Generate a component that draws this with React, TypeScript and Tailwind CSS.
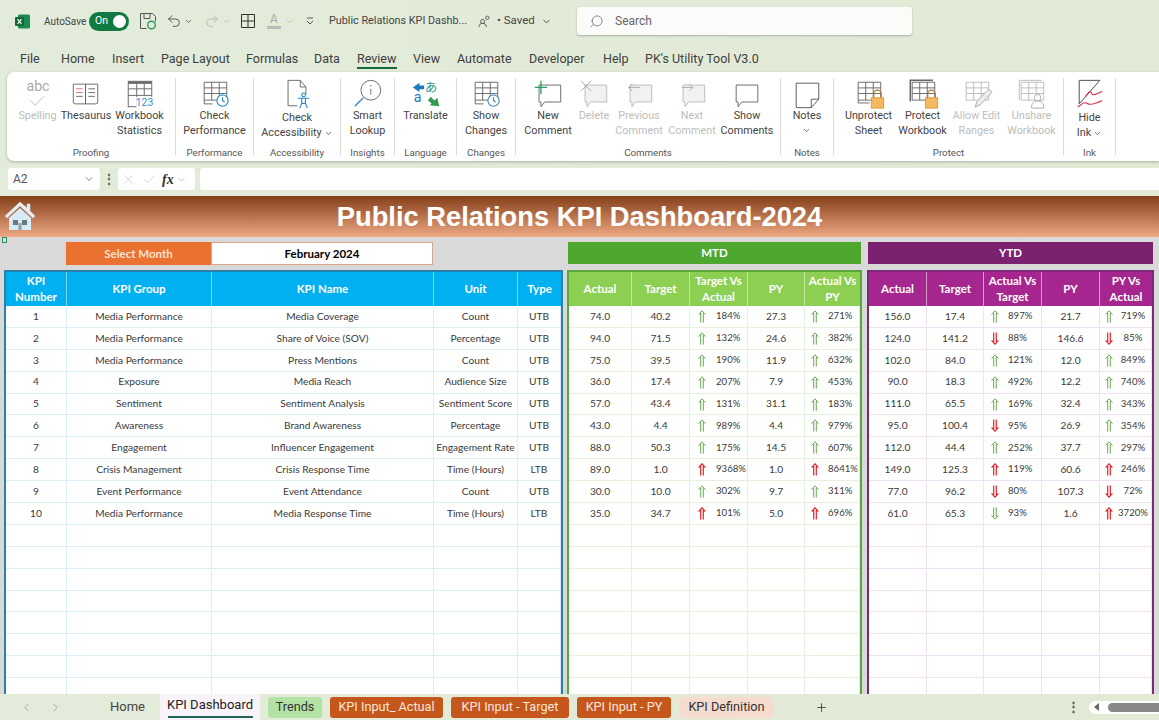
import type { ReactNode } from 'react';
import { ChevronDown, ChevronLeft, ChevronRight, Plus, Search, Check, X, Undo2, Redo2 } from 'lucide-react';

const tabs = [
  { t: 'File', c: 'w-[41px]' }, { t: 'Home', c: 'w-[51px]' }, { t: 'Insert', c: 'w-[49px]' }, { t: 'Page Layout', c: 'w-[85px]' },
  { t: 'Formulas', c: 'w-[68px]' }, { t: 'Data', c: 'w-[43px]' }, { t: 'Review', c: 'w-[56px]' }, { t: 'View', c: 'w-[44px]' },
  { t: 'Automate', c: 'w-[72px]' }, { t: 'Developer', c: 'w-[74px]' }, { t: 'Help', c: 'w-[42px]' }, { t: "PK's Utility Tool V3.0", c: 'w-[130px]' },
];

const kpis = [
  ['1', 'Media Performance', 'Media Coverage', 'Count', 'UTB'],
  ['2', 'Media Performance', 'Share of Voice (SOV)', 'Percentage', 'UTB'],
  ['3', 'Media Performance', 'Press Mentions', 'Count', 'UTB'],
  ['4', 'Exposure', 'Media Reach', 'Audience Size', 'UTB'],
  ['5', 'Sentiment', 'Sentiment Analysis', 'Sentiment Score', 'UTB'],
  ['6', 'Awareness', 'Brand Awareness', 'Percentage', 'UTB'],
  ['7', 'Engagement', 'Influencer Engagement', 'Engagement Rate', 'UTB'],
  ['8', 'Crisis Management', 'Crisis Response Time', 'Time (Hours)', 'LTB'],
  ['9', 'Event Performance', 'Event Attendance', 'Count', 'UTB'],
  ['10', 'Media Performance', 'Media Response Time', 'Time (Hours)', 'LTB'],
];

type Dir = 'gu' | 'ru' | 'rd' | 'gd';
type Row = [string, string, Dir, string, string, Dir, string];

const mtd: Row[] = [
  ['74.0', '40.2', 'gu', '184%', '27.3', 'gu', '271%'],
  ['94.0', '71.5', 'gu', '132%', '24.6', 'gu', '382%'],
  ['75.0', '39.5', 'gu', '190%', '11.9', 'gu', '632%'],
  ['36.0', '17.4', 'gu', '207%', '7.9', 'gu', '453%'],
  ['57.0', '43.4', 'gu', '131%', '31.1', 'gu', '183%'],
  ['43.0', '4.4', 'gu', '989%', '4.4', 'gu', '979%'],
  ['88.0', '50.3', 'gu', '175%', '14.5', 'gu', '607%'],
  ['89.0', '1.0', 'ru', '9368%', '1.0', 'ru', '8641%'],
  ['30.0', '10.0', 'gu', '302%', '9.7', 'gu', '311%'],
  ['35.0', '34.7', 'ru', '101%', '5.0', 'ru', '696%'],
];

const ytd: Row[] = [
  ['156.0', '17.4', 'gu', '897%', '21.7', 'gu', '719%'],
  ['124.0', '141.2', 'rd', '88%', '146.6', 'rd', '85%'],
  ['102.0', '84.0', 'gu', '121%', '12.0', 'gu', '849%'],
  ['90.0', '18.3', 'gu', '492%', '12.2', 'gu', '740%'],
  ['111.0', '65.5', 'gu', '169%', '32.4', 'gu', '343%'],
  ['95.0', '100.4', 'rd', '95%', '26.9', 'gu', '354%'],
  ['112.0', '44.4', 'gu', '252%', '37.7', 'gu', '297%'],
  ['149.0', '125.3', 'ru', '119%', '60.6', 'ru', '246%'],
  ['77.0', '96.2', 'rd', '80%', '107.3', 'rd', '72%'],
  ['61.0', '65.3', 'gd', '93%', '1.6', 'ru', '3720%'],
];

function Arrow({ d }: { d: Dir }) {
  const red = d[0] === 'r';
  return (
    <svg viewBox="0 0 8 13" className={`h-[13px] w-[8px] shrink-0 ${d[1] === 'd' ? 'rotate-180' : ''}`} fill="none" stroke={red ? '#e0242c' : '#62a548'} strokeWidth={red ? 1.2 : 0.95}>
      <path d="M.6 4.6 4 .8l3.4 3.8M2.7 3v9.6M5.3 3v9.6" />
    </svg>
  );
}

// ribbon icons, all drawn on a 34x34 box
function Ico({ children }: { children: ReactNode }) {
  return <svg viewBox="0 0 34 34" className="h-[32px] w-[32px]" fill="none" stroke="#666" strokeWidth="1">{children}</svg>;
}

function GridLines({ c = '#666' }: { c?: string }) {
  return <path stroke={c} d="M5.5 4.5h24v19h-24zM5.5 10.5h24M5.5 16.5h24M13.5 4.5v19M21.5 4.5v19" />;
}

function Clock({ c = '#2b88c8' }: { c?: string }) {
  return (
    <g stroke={c} strokeWidth="1.2">
      <circle cx="25" cy="24" r="6" fill="#fff" />
      <path d="M25 20.5V24l2.3 1.5M23 16.6h4" />
    </g>
  );
}

function Bubble({ c = '#666', fill = 'none', x = 7 }: { c?: string; fill?: string; x?: number }) {
  return <path stroke={c} fill={fill} d={`M${x}.5 7.5h23v18h-17l-4 5v-5h-2z`} />;
}

function Lock() {
  return (
    <g>
      <path stroke="#a8742a" strokeWidth="1.3" d="M22 21v-4a4 4 0 0 1 8 0v4" />
      <rect x="19.5" y="21" width="13" height="11" fill="#f4b860" stroke="#e09b3c" />
    </g>
  );
}

const icons: Record<string, ReactNode> = {
  spelling: (
    <Ico>
      <text x="17" y="14" textAnchor="middle" fontSize="15" fill="#aaa" stroke="none" fontFamily="Roboto">abc</text>
      <path stroke="#bbb" d="m9 24 5 5 10-10" />
    </Ico>
  ),
  thesaurus: (
    <Ico>
      <path d="M3.5 6.5h13v21h-11l-2-1zM16.5 6.5h13v20l-2 1h-11z" />
      <path stroke="#d76b6b" d="M6.5 11.5h7M6.5 15.5h7" />
      <path d="M6.5 19.5h7M19.5 11.5h7M19.5 15.5h7M19.5 19.5h7" />
    </Ico>
  ),
  stats: (
    <Ico>
      <rect x="4.5" y="3.5" width="25" height="27" />
      <path strokeWidth="2.4" d="M4.5 5h25" />
      <path d="M4.5 11.5h25M4.5 18.5h25M13.5 6v24M21.5 6v12" />
      <rect x="13" y="20" width="18" height="12" fill="#fff" stroke="none" />
      <text x="12.5" y="30" fontSize="11" fill="#3d8ec9" stroke="none" fontFamily="Roboto">123</text>
    </Ico>
  ),
  perf: <Ico><GridLines /><path d="M5.5 23.5v4h9" /><Clock /></Ico>,
  access: (
    <Ico>
      <path d="M7.5 2.5h13l6 7v8M20.5 2.5v7h6M7.5 2.5v27h10" />
      <g stroke="#2b88c8" strokeWidth="1.2">
        <circle cx="24" cy="18" r="2" />
        <path d="M18 21.5h12M22 22v5l-2 5M26 22v5l2 5M22 27h4" />
      </g>
    </Ico>
  ),
  lookup: (
    <Ico>
      <circle cx="20" cy="13" r="10.5" />
      <path d="M20 11.5v6M20 7.5v1.5" />
      <path stroke="#2b88c8" strokeWidth="1.3" d="m12 21-9 9" />
    </Ico>
  ),
  translate: (
    <Ico>
      <path fill="#1e78c0" stroke="none" d="M3 10l7-5v3h5v4h-5v3z" />
      <text x="16" y="15" fontSize="13" fill="#2f9a8a" stroke="none" fontFamily="'Noto Sans CJK JP'">あ</text>
      <text x="4" y="26" fontSize="15" fill="#1e78c0" stroke="none" fontFamily="Roboto">a</text>
      <path fill="#2f9a4a" stroke="none" d="M31 30l-10-1 2-2-4-3 3-4 4 4 3-3z" />
    </Ico>
  ),
  changes: <Ico><GridLines /><path d="M5.5 23.5v4h9" /><Clock c="#4a86b8" /></Ico>,
  newc: (
    <Ico>
      <Bubble />
      <path stroke="#2f9a62" strokeWidth="1.4" d="M3 10h13M9.5 3v14" />
    </Ico>
  ),
  del: (
    <Ico>
      <Bubble c="#bbb" fill="#f1f1f1" />
      <path stroke="#aaa" d="m3 3 11 11M14 3 3 14" />
    </Ico>
  ),
  prev: (
    <Ico>
      <Bubble c="#bbb" fill="#f1f1f1" />
      <path stroke="#aaa" d="M6 10h12M6 10l4-4M6 10l4 4" />
    </Ico>
  ),
  next: (
    <Ico>
      <Bubble c="#bbb" fill="#f1f1f1" />
      <path stroke="#aaa" d="M6 10h12M18 10l-4-4M18 10l-4 4" />
    </Ico>
  ),
  show: <Ico><Bubble x={5} /></Ico>,
  notes: (
    <Ico>
      <path stroke="#555" d="M5.5 5.5h24v17l-8 9h-16z" />
      <path stroke="#555" d="M29.5 22.5h-8v9" />
    </Ico>
  ),
  unprotect: <Ico><GridLines /><path d="M5.5 23.5v3h12" /><Lock /></Ico>,
  protect: <Ico><path strokeWidth="1.6" d="M3.5 25V2.5h24" /><GridLines /><Lock /></Ico>,
  allow: (
    <Ico>
      <GridLines c="#bbb" />
      <path stroke="#aaa" fill="#eee" d="m15 31 2-6 12-13 4 3-12 13z" />
    </Ico>
  ),
  unshare: (
    <Ico>
      <path stroke="#bbb" d="M3.5 24V2.5h24" />
      <GridLines c="#bbb" />
      <circle cx="23" cy="21" r="3.5" stroke="#aaa" fill="#fff" />
      <path stroke="#aaa" fill="#fff" d="M16.5 32c0-6 3-7.500 6.500-7.500s6.500 1.500 6.500 7.500z" />
    </Ico>
  ),
  ink: (
    <Ico>
      <path stroke="#444" d="M5.500 2.500h22M5.500 2.500v25M5.500 27.500 27.500 2.500" />
      <path stroke="#d8344e" strokeWidth="1.2" d="M12 20c4-6 6-7 7-3 1 2 5 0 11-3M4 31c5-4 7-6 10-4s8 1 16-3" />
    </Ico>
  ),
};

function Btn({ icon, l1, l2, w, off, drop, low }: { icon: string; l1: string; l2?: string; w: string; off?: boolean; drop?: boolean; low?: boolean }) {
  return (
    <div className={`${w} flex shrink-0 flex-col items-center`}>
      <div className="flex h-[30px] items-start">{icons[icon]}</div>
      <div className={`${low ? 'mt-[2px]' : ''} text-center text-[10.8px] leading-[15px] whitespace-nowrap ${off ? 'text-[#bdbdbd]' : 'text-[#444]'}`}>
        <div>{l1}</div>
        {l2 && <div>{l2}{drop && <ChevronDown className="ml-[2px] inline h-[9px] w-[9px]" strokeWidth={2} />}</div>}
        {!l2 && drop && <ChevronDown className="mx-auto mt-[3px] h-[9px] w-[9px]" strokeWidth={2} />}
      </div>
    </div>
  );
}

function Group({ w, label, children }: { w: string; label: string; children: ReactNode }) {
  return (
    <div className={`${w} relative flex h-full shrink-0 flex-col border-r border-[#dcdcdc]`}>
      <div className="flex flex-1 justify-center">{children}</div>
      <div className="absolute inset-x-0 bottom-[-4px] text-center text-[9.7px] leading-[12px] text-[#555]">{label}</div>
    </div>
  );
}

function Head({ t, c }: { t: string; c: string }) {
  return <div className={`flex items-center justify-center border-r px-[2px] text-center text-[11.5px] leading-[16px] font-bold text-white last:border-r-0 ${c}`}>{t}</div>;
}

function Body({ children, line }: { children?: ReactNode; line: string }) {
  return <div className={`flex h-[21.9px] items-center justify-center border-r border-b text-[10.2px] whitespace-nowrap text-[#3a3a3a] last:border-r-0 ${line}`}>{children}</div>;
}

function Pct({ d, v, line, arrow, gap }: { d: Dir; v: string; line: string; arrow: string; gap: string }) {
  return (
    <div className={`flex h-[21.9px] items-center border-r border-b text-[9.6px] text-[#3a3a3a] last:border-r-0 ${line} ${arrow}`}>
      <Arrow d={d} />
      <span className={gap}>{v}</span>
    </div>
  );
}

const blanks = Array.from({ length: 9 });

function ValueTable({ box, head, line, sep, cols, labels, rows, firstPct, lastPct }: {
  box: string; head: string; line: string; sep: string; cols: string; labels: string[]; rows: Row[];
  firstPct: { arrow: string; gap: string }; lastPct: { arrow: string; gap: string };
}) {
  return (
    <div className={`${box} h-[440px] shrink-0 overflow-hidden border-2 bg-white`}>
      <div className={`grid h-[34px] ${cols} ${head}`}>
        {labels.map(l => <Head key={l} t={l} c={sep} />)}
      </div>
      <div className={`grid ${cols}`}>
        {rows.map(r => [
          <Body key={r[0] + 'a'} line={line}>{r[0]}</Body>,
          <Body key={r[0] + 't'} line={line}>{r[1]}</Body>,
          <Pct key={r[0] + 'p'} d={r[2]} v={r[3]} line={line} {...firstPct} />,
          <Body key={r[0] + 'y'} line={line}>{r[4]}</Body>,
          <Pct key={r[0] + 'q'} d={r[5]} v={r[6]} line={line} {...lastPct} />,
        ])}
        {blanks.map((_, i) => labels.map(l => <Body key={i + l} line={line} />))}
      </div>
    </div>
  );
}

function SheetTab({ t, c }: { t: string; c: string }) {
  return <div className={`flex h-[21px] shrink-0 items-center justify-center rounded-[3px] text-[12.7px] ${c}`}>{t}</div>;
}

export default function App() {
  const kpiCols = 'grid-cols-[61px_145px_222px_84px_1fr]';
  const kpiLine = 'border-[#dcedf6]';
  return (
    <div className="flex h-[720px] w-full flex-col overflow-hidden bg-gradient-to-r from-[#e3ebda] to-[#e2ead6] [font-family:Roboto,sans-serif]">
      {/* title bar */}
      <div className="flex h-[42px] shrink-0 items-center pl-[15px] text-[#444]">
        <svg viewBox="0 0 15 15" className="h-[15px] w-[15px] shrink-0">
          <rect x="3" y="0.500" width="12" height="14" rx="1.500" fill="#1d8a4e" />
          <rect x="0" y="3" width="9" height="9" rx="1" fill="#0e6b38" />
          <path stroke="#fff" strokeWidth="1.200" d="m2.500 5.200 4 4.600m0-4.600-4 4.600" />
        </svg>
        <span className="ml-[14px] w-[45px] shrink-0 text-[10px] whitespace-nowrap">AutoSave</span>
        <div className="flex h-[19px] w-[40px] shrink-0 items-center justify-between rounded-full bg-[#117a43] pr-[3px] pl-[6px] text-[10.500px] text-white">
          On<span className="h-[13px] w-[13px] rounded-full bg-white" />
        </div>
        <svg viewBox="0 0 18 18" className="ml-[10px] h-[18px] w-[18px] shrink-0" fill="none" stroke="#555">
          <path d="M1.500 1.500h12l3 3v5M1.500 1.500v15h6M5 1.500v5h6v-5" />
          <circle cx="12.500" cy="13" r="3.800" stroke="#2f9a62" strokeWidth="1.400" />
        </svg>
        <Undo2 className="ml-[9px] h-[16px] w-[16px] shrink-0" strokeWidth={1.3} />
        <ChevronDown className="ml-[2px] h-[9px] w-[9px] shrink-0" />
        <Redo2 className="ml-[11px] h-[16px] w-[16px] shrink-0 text-[#b5b5b5]" strokeWidth={1.3} />
        <ChevronDown className="ml-[2px] h-[9px] w-[9px] shrink-0 text-[#b5b5b5]" />
        <svg viewBox="0 0 14 14" className="ml-[10px] h-[14px] w-[14px] shrink-0" fill="none" stroke="#333">
          <path d="M.500.500h13v13H.500zM7 .500v13M.500 7h13" />
        </svg>
        <div className="ml-[12px] flex w-[14px] shrink-0 flex-col items-center text-[12px] leading-[13px] text-[#aaa]">A<span className="h-[3px] w-[14px] bg-[#bbb]" /></div>
        <ChevronDown className="ml-[4px] h-[9px] w-[9px] shrink-0 text-[#b5b5b5]" />
        <svg viewBox="0 0 8 8" className="ml-[12px] h-[8px] w-[8px] shrink-0" fill="none" stroke="#555"><path d="M1 1h6M1 4l3 3 3-3" /></svg>
        <span className="ml-[15px] w-[149px] shrink-0 text-[10.8px] whitespace-nowrap">Public Relations KPI Dashb...</span>
        <svg viewBox="0 0 14 14" className="h-[13px] w-[13px] shrink-0" fill="none" stroke="#555"><circle cx="5" cy="7" r="2.200" /><path d="M1 13c0-3 2-4 4-4s4 1 4 4" /><circle cx="10" cy="3" r="1.800" /></svg>
        <span className="ml-[6px] w-[41px] shrink-0 text-[11.500px] whitespace-nowrap">• Saved</span>
        <ChevronDown className="ml-[3px] h-[11px] w-[11px] shrink-0" />
        <div className="ml-[25px] flex h-[28px] w-[335px] shrink-0 items-center rounded-[3px] bg-[#fbfcfa] pl-[12px] text-[12px] text-[#666] shadow-[0_1px_2px_rgba(0,0,0,0.25)]">
          <Search className="h-[15px] w-[15px] -scale-x-100" strokeWidth={1.2} />
          <span className="ml-[11px]">Search</span>
        </div>
      </div>

      {/* tabs */}
      <div className="flex h-[30px] shrink-0 items-start pl-[20px] text-[12.5px] text-[#3e3e3e]">
        {tabs.map(x => (
          <div key={x.t} className={`${x.c} relative shrink-0 pt-[8px] leading-[18px] whitespace-nowrap`}>
            {x.t}
            {x.t === 'Review' && <span className="absolute top-[25px] left-0 h-[2px] w-[40px] bg-[#14683c]" />}
          </div>
        ))}
      </div>

      {/* ribbon */}
      <div className="ml-[7px] flex h-[89px] shrink-0 rounded-l-[7px] bg-white py-[6px] shadow-[0_1px_3px_rgba(0,0,0,0.25)]">
        <Group w="w-[169px]" label="Proofing">
          <Btn icon="spelling" l1="Spelling" w="w-[48px]" off />
          <Btn icon="thesaurus" l1="Thesaurus" w="w-[49px]" />
          <Btn icon="stats" l1="Workbook" l2="Statistics" w="w-[58px]" />
        </Group>
        <Group w="w-[78px]" label="Performance"><Btn icon="perf" l1="Check" l2="Performance" w="w-[70px]" /></Group>
        <Group w="w-[87px]" label="Accessibility"><Btn icon="access" l1="Check" l2="Accessibility" w="w-[80px]" drop low /></Group>
        <Group w="w-[54px]" label="Insights"><Btn icon="lookup" l1="Smart" l2="Lookup" w="w-[50px]" /></Group>
        <Group w="w-[62px]" label="Language"><Btn icon="translate" l1="Translate" w="w-[56px]" /></Group>
        <Group w="w-[59px]" label="Changes"><Btn icon="changes" l1="Show" l2="Changes" w="w-[54px]" /></Group>
        <Group w="w-[265px]" label="Comments">
          <Btn icon="newc" l1="New" l2="Comment" w="w-[56px]" />
          <Btn icon="del" l1="Delete" w="w-[36px]" off />
          <Btn icon="prev" l1="Previous" l2="Comment" w="w-[54px]" off />
          <Btn icon="next" l1="Next" l2="Comment" w="w-[52px]" off />
          <Btn icon="show" l1="Show" l2="Comments" w="w-[58px]" />
        </Group>
        <Group w="w-[53px]" label="Notes"><Btn icon="notes" l1="Notes" w="w-[44px]" drop /></Group>
        <Group w="w-[230px]" label="Protect">
          <Btn icon="unprotect" l1="Unprotect" l2="Sheet" w="w-[58px]" />
          <Btn icon="protect" l1="Protect" l2="Workbook" w="w-[50px]" />
          <Btn icon="allow" l1="Allow Edit" l2="Ranges" w="w-[58px]" off />
          <Btn icon="unshare" l1="Unshare" l2="Workbook" w="w-[52px]" off />
        </Group>
        <Group w="w-[52px]" label="Ink"><Btn icon="ink" l1="Hide" l2="Ink" w="w-[44px]" drop low /></Group>
      </div>

      {/* formula bar */}
      <div className="flex h-[35px] shrink-0 items-start pt-[7px] pl-[8px] text-[#555]">
        <div className="flex h-[22px] w-[92px] shrink-0 items-center justify-between rounded-[3px] bg-white pr-[5px] pl-[5px] text-[12px]">
          A2<ChevronDown className="h-[12px] w-[12px]" strokeWidth={1.500} />
        </div>
        <div className="flex h-[22px] w-[18px] shrink-0 items-center justify-center text-[12px] font-bold">⋮</div>
        <div className="flex h-[22px] w-[77px] shrink-0 items-center rounded-[3px] bg-white pl-[3px]">
          <X className="h-[15px] w-[15px] text-[#bbb]" strokeWidth={1} />
          <Check className="ml-[6px] h-[15px] w-[15px] text-[#bbb]" strokeWidth={1} />
          <span className="ml-[5px] text-[14px] font-bold text-[#333] italic [font-family:Liberation_Serif,serif]">fx</span>
          <ChevronDown className="ml-[2px] h-[11px] w-[11px] text-[#999]" strokeWidth={1.200} />
        </div>
        <div className="ml-[5px] h-[22px] flex-1 rounded-l-[3px] bg-white" />
      </div>

      {/* sheet */}
      <div className="relative min-h-0 flex-1 overflow-hidden bg-[#d9d9d9] [font-family:Lato,sans-serif]">
        <div className="relative flex h-[41px] items-center justify-center bg-gradient-to-b from-[#854019] to-[#eeaa84] pt-[1px] text-[27.3px] font-bold text-white [font-family:Liberation_Sans,sans-serif]">
          Public Relations KPI Dashboard-2024
          <svg viewBox="0 0 32 30" className="absolute top-[5px] left-[4px] h-[30px] w-[32px]">
            <path d="M16 1 1 15l2 2 13-12 13 12 2-2-5-5V3h-3v4z" fill="#e8eef2" stroke="#c9d6de" strokeWidth=".6" />
            <path d="M5 17 16 7l11 10v12H5z" fill="#d8eaf6" />
            <rect x="9" y="19" width="5" height="5" fill="#6b7780" />
            <rect x="18" y="19" width="5" height="5" fill="#6b7780" />
            <rect x="14.500" y="22" width="3" height="7" fill="#8da0ac" />
          </svg>
        </div>
        <span className="absolute top-[41px] left-[2px] h-[6px] w-[5px] border border-[#2f8f5a] bg-[#cfe8d8]" />

        <div className="flex h-[33px] items-start pt-[5px] pl-[66px] text-[11.500px] font-bold">
          <div className="flex h-[23px] w-[145px] shrink-0 items-center justify-center bg-[#ea7130] text-[#fbe3d2]">Select Month</div>
          <div className="flex h-[23px] w-[222px] shrink-0 items-center justify-center border border-[#d8a48a] bg-white text-black">February 2024</div>
          <div className="ml-[135px] flex h-[22px] w-[293px] shrink-0 items-center justify-center bg-[#4ea72e] text-white">MTD</div>
          <div className="ml-[7px] flex h-[22px] w-[285px] shrink-0 items-center justify-center bg-[#7b2170] text-white">YTD</div>
        </div>

        <div className="flex gap-[4px] pl-[4px]">
          <div className="h-[440px] w-[559px] shrink-0 overflow-hidden border-2 border-[#2c7fa8] bg-white">
            <div className={`grid h-[34px] bg-[#00b0f0] ${kpiCols}`}>
              {['KPI Number', 'KPI Group', 'KPI Name', 'Unit', 'Type'].map(l => <Head key={l} t={l} c="border-[#7fd4f5]" />)}
            </div>
            <div className={`grid ${kpiCols}`}>
              {kpis.map(r => r.map((v, i) => <Body key={r[0] + i} line={kpiLine}>{v}</Body>))}
              {blanks.map((_, i) => kpis[0].map((_v, j) => <Body key={i + '-' + j} line={kpiLine} />))}
            </div>
          </div>
          <ValueTable
            box="w-[295px] border-[#5aa63c]"
            head="bg-[#8ccf52]"
            sep="border-[#c3e6a4]"
            line="border-[#e4f1dc]"
            cols="grid-cols-[63px_58px_58px_57px_1fr]"
            labels={['Actual', 'Target', 'Target Vs Actual', 'PY', 'Actual Vs PY']}
            rows={mtd}
            firstPct={{ arrow: 'pl-[8px]', gap: 'ml-[10px]' }}
            lastPct={{ arrow: 'pl-[6px]', gap: 'ml-[9px]' }}
          />
          <div className="ml-[1px]">
            <ValueTable
              box="w-[287px] border-[#7b2a78]"
              head="bg-[#a6268f]"
              sep="border-[#d39ac8]"
              line="border-[#f0e2f2]"
              cols="grid-cols-[58px_57px_58px_58px_1fr]"
              labels={['Actual', 'Target', 'Actual Vs Target', 'PY', 'PY Vs Actual']}
              rows={ytd}
              firstPct={{ arrow: 'pl-[7px]', gap: 'ml-[9px]' }}
              lastPct={{ arrow: 'pl-[5px]', gap: 'flex-1 text-center pl-[2px]' }}
            />
          </div>
        </div>
      </div>

      {/* sheet tabs */}
      <div className="flex h-[26px] shrink-0 items-center pl-[20px] text-[#444]">
        <ChevronLeft className="h-[13px] w-[13px] shrink-0 text-[#888]" strokeWidth={1.200} />
        <ChevronRight className="ml-[16px] h-[13px] w-[13px] shrink-0 text-[#888]" strokeWidth={1.200} />
        <div className="ml-[48px] w-[50px] shrink-0 text-[13px]">Home</div>
        <div className="relative flex h-[26px] w-[100px] shrink-0 items-center justify-center rounded-t-[3px] bg-[#f8f4fa] pb-[4px] text-[13px] text-[#222]">
          KPI Dashboard
          <span className="absolute bottom-[2px] left-[8px] h-[2px] w-[85px] bg-[#23655c]" />
        </div>
        <SheetTab t="Trends" c="ml-[8px] w-[54px] bg-[#b4e2a4] text-[#333]" />
        <SheetTab t="KPI Input_ Actual" c="ml-[8px] w-[113px] bg-[#c5561c] text-[#fbe6da]" />
        <SheetTab t="KPI Input - Target" c="ml-[8px] w-[118px] bg-[#c5561c] text-[#fbe6da]" />
        <SheetTab t="KPI Input - PY" c="ml-[8px] w-[94px] bg-[#c5561c] text-[#fbe6da]" />
        <SheetTab t="KPI Definition" c="ml-[8px] w-[95px] bg-[#f6dccf] text-[#333]" />
        <Plus className="ml-[41px] h-[13px] w-[13px] shrink-0 text-[#333]" strokeWidth={1.500} />
        <span className="ml-[239px] w-[8px] shrink-0 text-center text-[13px] font-bold text-[#555]">⋮</span>
        <div className="ml-[14px] flex h-[13px] flex-1 items-center rounded-l-full bg-white pl-[5px]">
          <span className="h-0 w-0 border-y-[4px] border-r-[5px] border-y-transparent border-r-[#666]" />
          <span className="ml-[9px] h-[9px] flex-1 rounded-l-full bg-[#888]" />
        </div>
      </div>
    </div>
  );
}
